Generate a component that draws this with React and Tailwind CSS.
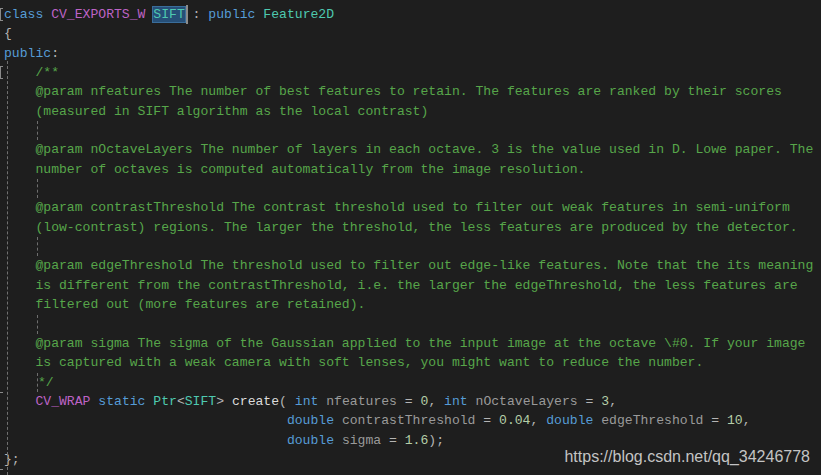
import React from "react";

const K = ({ children }) => <span className="text-[#569cd6]">{children}</span>;
const T = ({ children }) => <span className="text-[#4ec9b0]">{children}</span>;
const M = ({ children }) => <span className="text-[#bd63c5]">{children}</span>;
const P = ({ children }) => <span className="text-[#b4b4b4]">{children}</span>;
const A = ({ children }) => <span className="text-[#9a9a9a]">{children}</span>;
const N = ({ children }) => <span className="text-[#b5cea8]">{children}</span>;
const C = ({ children }) => <span className="text-[#57a64a]">{children}</span>;
const W = ({ children }) => <span className="text-[#dcdcdc]">{children}</span>;

const Line = ({ children }) => (
  <div className="h-[19.35px] leading-[19.35px] whitespace-pre">{children}</div>
);

const Guide = () => (
  <div className="h-[19.35px] flex">
    <div className="ml-[33px] w-0 h-full border-l border-dashed border-[#6e6e6e]" />
  </div>
);

const comments = [
  ["    @param nfeatures The number of best features to retain. The features are ranked by their scores",
   "    (measured in SIFT algorithm as the local contrast)"],
  ["    @param nOctaveLayers The number of layers in each octave. 3 is the value used in D. Lowe paper. The",
   "    number of octaves is computed automatically from the image resolution."],
  ["    @param contrastThreshold The contrast threshold used to filter out weak features in semi-uniform",
   "    (low-contrast) regions. The larger the threshold, the less features are produced by the detector."],
  ["    @param edgeThreshold The threshold used to filter out edge-like features. Note that the its meaning",
   "    is different from the contrastThreshold, i.e. the larger the edgeThreshold, the less features are",
   "    filtered out (more features are retained)."],
  ["    @param sigma The sigma of the Gaussian applied to the input image at the octave \\#0. If your image",
   "    is captured with a weak camera with soft lenses, you might want to reduce the number."],
];

export default function App() {
  const pad = " ".repeat(36);
  return (
    <div className="relative w-[821px] h-[475px] overflow-hidden bg-[#1e1e1e]">
      {/* gutter outline marks */}
      <div className="absolute left-[7px] top-[61px] bottom-0 w-0 border-l border-dashed border-[#707070]" />
      <div className="absolute left-0 top-[8px] w-[3px] h-[13px] border border-r-0 border-[#8a8a8a]" />
      <div className="absolute left-0 top-[66px] w-[3px] h-[13px] border border-r-0 border-[#8a8a8a]" />
      <div className="absolute left-0 top-[392px] w-[3px] h-0 border-t border-[#8a8a8a]" />
      <div className="absolute left-0 top-[469px] w-[3px] h-0 border-t border-[#8a8a8a]" />

      <div className="pt-[5px] pl-[4px] font-['Liberation_Mono',monospace] text-[13.1px]">
        <Line>
          <K>class</K> <M>CV_EXPORTS_W</M>{" "}
          <span className="relative bg-[#264f78] outline outline-1 outline-[#3a6d9a]">
            <T>SIFT</T>
          </span>
          <span className="inline-block w-[2px] h-[19px] align-top bg-[#8c8c8c] ml-[1px] -mr-[3px]" /> <P>:</P> <K>public</K> <T>Feature2D</T>
        </Line>
        <Line><P>{"{"}</P></Line>
        <Line><K>public</K><P>:</P></Line>
        <Line><C>{"    /**"}</C></Line>
        {comments.map((block, i) => (
          <React.Fragment key={i}>
            {block.map((l, j) => (
              <Line key={j}><C>{l}</C></Line>
            ))}
            {i < comments.length - 1 && <Guide />}
          </React.Fragment>
        ))}
        <div className="h-[19.35px] leading-[19.35px] whitespace-pre flex">
          <div className="ml-[33px] w-0 h-full border-l border-dashed border-[#6e6e6e]" />
          <C>{"*/"}</C>
        </div>
        <Line>
          {"    "}<M>CV_WRAP</M> <K>static</K> <T>Ptr</T><P>{"<"}</P><T>SIFT</T><P>{">"}</P> <W>create</W><P>(</P> <K>int</K> <A>nfeatures</A> <P>=</P> <N>0</N><P>,</P> <K>int</K> <A>nOctaveLayers</A> <P>=</P> <N>3</N><P>,</P>
        </Line>
        <Line>
          {pad}<K>double</K> <A>contrastThreshold</A> <P>=</P> <N>0.04</N><P>,</P> <K>double</K> <A>edgeThreshold</A> <P>=</P> <N>10</N><P>,</P>
        </Line>
        <Line>
          {pad}<K>double</K> <A>sigma</A> <P>=</P> <N>1.6</N><P>);</P>
        </Line>
        <Line><P>{"};"}</P></Line>
      </div>

      <div className="absolute right-[11px] top-[445px] font-['Liberation_Sans',Arial,sans-serif] text-[16px] text-[#c4c4c4]">
        https://blog.csdn.net/qq_34246778
      </div>
    </div>
  );
}
